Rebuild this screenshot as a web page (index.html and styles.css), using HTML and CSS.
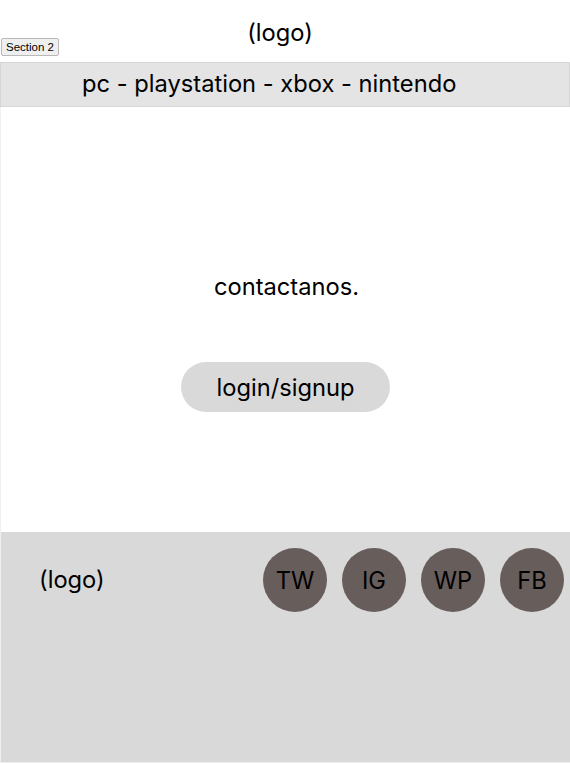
FILE: index.html
```html
<!DOCTYPE html>
<html lang="es">
<head>
<meta charset="utf-8">
<title>Section 2</title>
<link rel="stylesheet" href="styles.css">
</head>
<body>
<div class="page">
  <header class="header">
    <button class="section-btn">Section 2</button>
    <div class="logo">(logo)</div>
  </header>
  <nav class="nav">pc - playstation - xbox - nintendo</nav>
  <main class="main">
    <p class="contact">contactanos.</p>
    <button class="login">login/signup</button>
  </main>
  <footer class="footer">
    <div class="foot-logo">(logo)</div>
    <div class="socials">
      <span class="social">TW</span>
      <span class="social">IG</span>
      <span class="social">WP</span>
      <span class="social">FB</span>
    </div>
  </footer>
</div>
</body>
</html>
```

FILE: styles.css
```css
* { box-sizing: border-box; }
html, body { margin: 0; padding: 0; background: #fff; }
body {
  font-family: Inter, "Noto Sans", sans-serif;
  color: #000;
  width: 570px;
  height: 763px;
  overflow: hidden;
}
.page {
  display: flex;
  flex-direction: column;
  height: 763px;
}
.header {
  height: 62px;
  display: grid;
  grid-template-columns: 1fr auto 1fr;
  align-items: start;
}
.section-btn {
  grid-column: 1;
  grid-row: 1;
  justify-self: start;
  margin: 38px 0 0 1px;
  height: 18px;
  padding: 0 4px;
  font-family: "Liberation Sans", Arial, sans-serif;
  font-size: 11.5px;
  color: #000;
  background: #efefef;
  border: 1px solid #b9b9b9;
  border-radius: 2px;
}
.logo {
  grid-column: 2;
  grid-row: 1;
  font-size: 23.7px;
  line-height: 28px;
  margin-top: 19px;
  padding-right: 10px;
}
.nav {
  height: 45px;
  background: #e4e4e4;
  border: 1px solid #d6d6d6;
  font-size: 23.7px;
  line-height: 42px;
  padding-left: 81px;
}
.main {
  height: 425px;
  display: flex;
  flex-direction: column;
  align-items: center;
  border-left: 1px solid #f0f0f0;
}
.contact {
  margin: 166px 0 0 2px;
  font-size: 23.7px;
  line-height: 28px;
}
.login {
  margin-top: 61px;
  width: 209px;
  height: 50px;
  border: 0;
  border-radius: 25px;
  background: #d9d9d9;
  font-family: Inter, "Noto Sans", sans-serif;
  font-size: 23.7px;
  color: #000;
  padding: 0;
}
.footer {
  flex: 1;
  background: #d9d9d9;
  border-left: 1px solid #eeeeee;
  border-bottom: 1px solid #eeeeee;
  display: flex;
  justify-content: space-between;
  align-items: flex-start;
  padding: 16px 6px 0 38px;
}
.foot-logo {
  font-size: 23.7px;
  line-height: 28px;
  margin-top: 18px;
}
.socials {
  display: flex;
  gap: 15px;
}
.social {
  width: 64px;
  height: 64px;
  border-radius: 50%;
  background: #675d5b;
  display: flex;
  align-items: center;
  justify-content: center;
  font-size: 23.7px;
  color: #000;
}
```
